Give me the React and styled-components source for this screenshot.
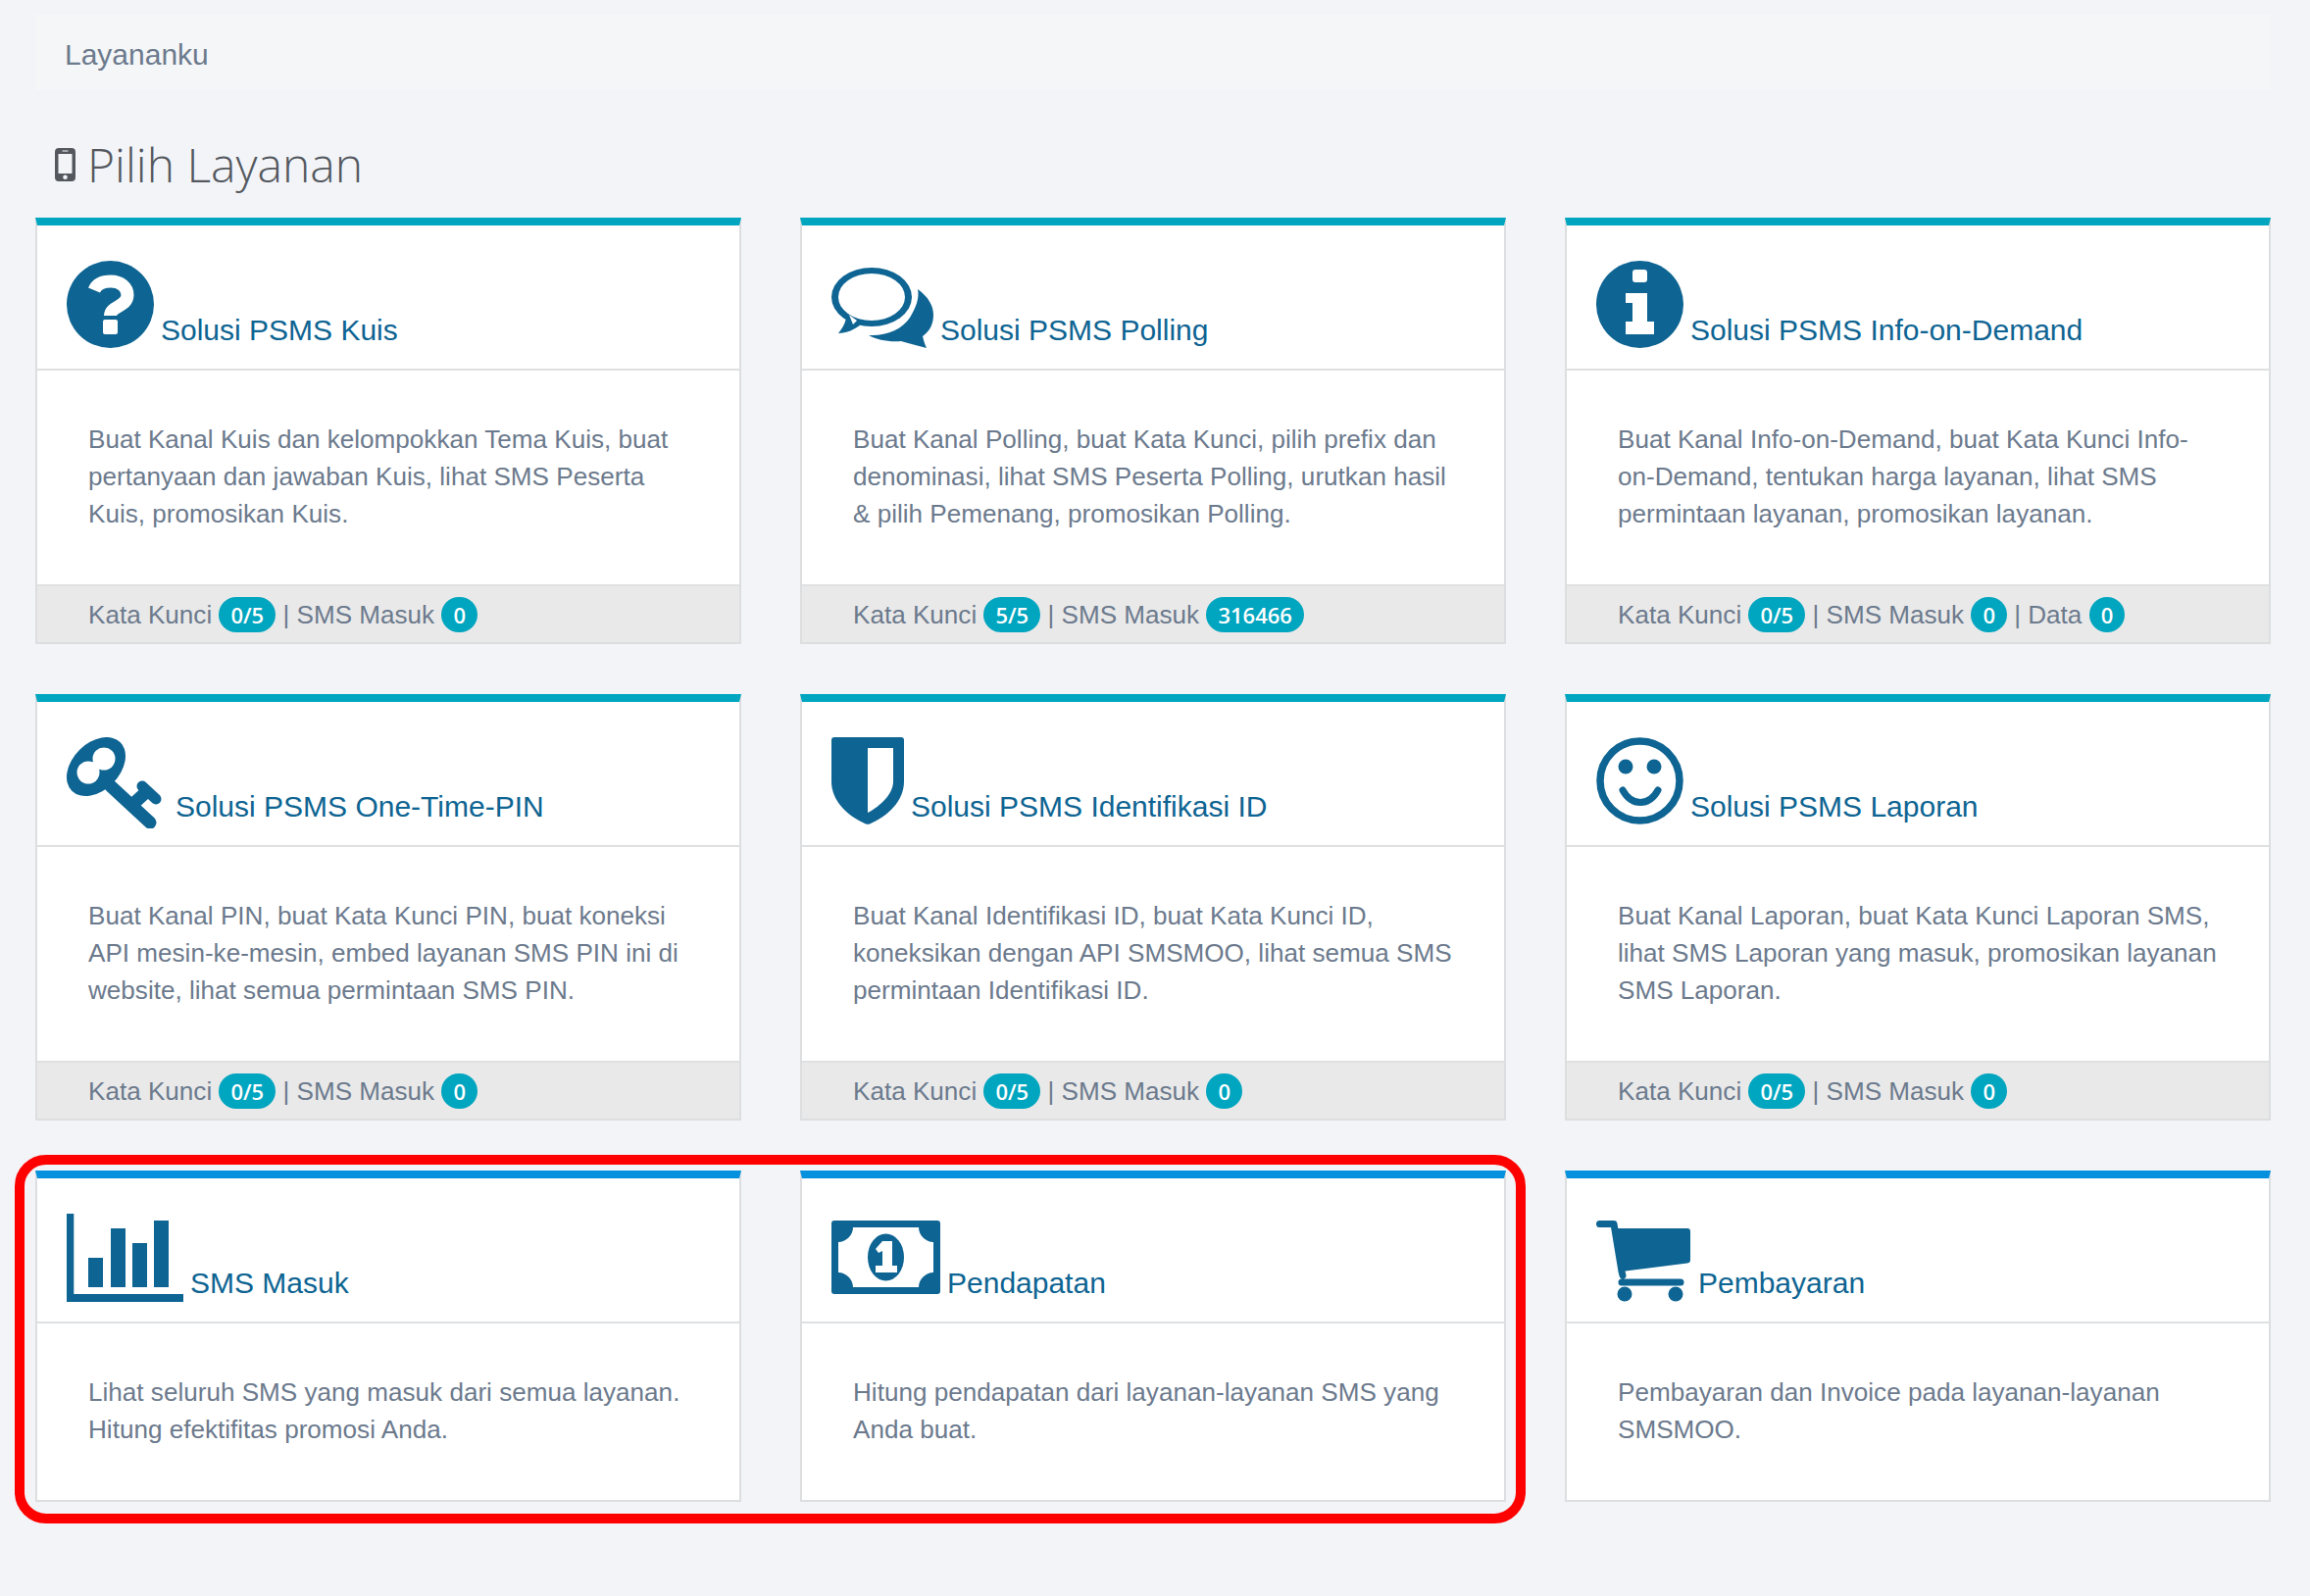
import React from "react";
import styled, { createGlobalStyle } from "styled-components";

const INK = "#0e6492";

const Global = createGlobalStyle`
  html, body { margin: 0; padding: 0; background: #f2f4f8; }
  * { box-sizing: border-box; }
`;

const Page = styled.main`
  position: relative;
  min-height: 1628px;
  padding: 15px 40px 0 36px;
  background: #f2f4f8;
  font-family: "Liberation Sans", Arial, sans-serif;
  font-size: 26.1px;
  line-height: 38px;
  color: #6c7a8d;
`;

const Breadcrumb = styled.nav`
  height: 77px;
  padding: 22px 0 0 30px;
  background: #f5f6f7;
  font-size: 30px;
  line-height: 38px;
  color: #6c7a8d;
`;

const Heading = styled.h1`
  display: flex;
  align-items: center;
  gap: 12px;
  height: 60px;
  margin: 46px 0 24px;
  padding-left: 20px;
  font-family: "Open Sans", sans-serif;
  font-weight: 300;
  font-size: 48px;
  line-height: 60px;
  color: #54585e;
`;

const Grid = styled.section`
  display: grid;
  grid-template-columns: repeat(3, 1fr);
  column-gap: 60px;
  row-gap: 51px;
`;

const Card = styled.article`
  display: flex;
  flex-direction: column;
  background: #fff;
  border: 2px solid #dcdee0;
  border-top: 8px solid ${(p) => p.$accent};
`;

const CardHeader = styled.header`
  display: flex;
  align-items: flex-end;
  height: 148px;
  padding: 36px 0 17px 30px;
  border-bottom: 2px solid #dfe0e2;
`;

const CardTitle = styled.h2`
  margin: 0 0 2px 7px;
  font-weight: 400;
  font-size: 30px;
  line-height: 40px;
  color: ${INK};
`;

const CardBody = styled.p`
  margin: 0;
  padding: 51px 52px 53px;
  height: ${(p) => p.$lines * 38 + 104}px;
`;

const CardFooter = styled.footer`
  height: 59px;
  padding: 11px 0 0 52px;
  background: #e9e9e9;
  border-top: 2px solid #dfe0e2;
  line-height: 36px;
  white-space: nowrap;
`;

const Badge = styled.span`
  display: inline-block;
  min-width: 36px;
  height: 36px;
  padding: 0 12px;
  border-radius: 18px;
  background: #00a5bf;
  color: #fff;
  font-family: "Open Sans", sans-serif;
  font-weight: 600;
  font-size: 22px;
  line-height: 36px;
  text-align: center;
  vertical-align: top;
`;

const Highlight = styled.div`
  position: absolute;
  left: 15px;
  top: 1178px;
  width: 1541px;
  height: 376px;
  border: 10px solid #ff0000;
  border-radius: 32px;
  pointer-events: none;
`;

const Phone = () => (
  <svg width="21" height="34" viewBox="0 0 21 34" aria-hidden="true">
    <path
      fill="#54585e"
      fillRule="evenodd"
      d="M4 0H17Q21 0 21 4V30Q21 34 17 34H4Q0 34 0 30V4Q0 0 4 0ZM3.5 6V26H17.5V6ZM7.5 2.4V3.6H13.5V2.4ZM10.5 27.5A2.3 2.3 0 1 0 10.5 32.1A2.3 2.3 0 1 0 10.5 27.5Z"
    />
  </svg>
);

const Canvas = ({ w, children }) => (
  <svg width={w} height="93" viewBox={`0 0 ${w} 93`} fill={INK} aria-hidden="true" style={{ flex: "none" }}>
    {children}
  </svg>
);

const QuestionIcon = () => (
  <Canvas w={89}>
    <circle cx="44.5" cy="44.5" r="44.5" />
    <path d="M28 30C31 23 38 21 45 21C55 21 62 27 62 35C62 47 44.5 46 44.5 56" fill="none" stroke="#fff" strokeWidth="13" />
    <rect x="37" y="60" width="15" height="15" rx="2" fill="#fff" />
  </Canvas>
);

const ChatIcon = () => (
  <Canvas w={104}>
    <ellipse cx="41" cy="37" rx="41" ry="30" />
    <path d="M15 56C15 62 12 68 7 74C15 74 24 70 30 65Z" />
    <ellipse cx="41" cy="37" rx="34" ry="24" fill="#fff" />
    <path d="M18 55L26 61L22 65Z" fill="#fff" />
    <path d="M88 29C99 37 104 46 104 55C104 65 100 72 93 77C94 81 95 85 97 89C88 87 79 84 71 82C59 83 47 81 38 76C56 77 72 70 80 58C86 48 90 38 88 29Z" />
  </Canvas>
);

const InfoIcon = () => (
  <Canvas w={89}>
    <circle cx="44.5" cy="44.5" r="44.5" />
    <rect x="37" y="9" width="15" height="13" rx="3" fill="#fff" />
    <path d="M30 33H52V62H59V75H30V62H37V43H30Z" fill="#fff" />
  </Canvas>
);

const KeyIcon = () => (
  <Canvas w={104}>
    <ellipse cx="30" cy="30" rx="35" ry="24" transform="rotate(-45 30 30)" />
    <circle cx="22" cy="36" r="11.5" fill="#fff" />
    <circle cx="38" cy="22" r="11.5" fill="#fff" />
    <path d="M26 32L34 26" stroke="#fff" strokeWidth="10" />
    <path d="M45 50L85 87M69 67L81 56" fill="none" stroke={INK} strokeWidth="13" strokeLinecap="round" />
    <path d="M77 50L91 63" fill="none" stroke={INK} strokeWidth="11" strokeLinecap="round" />
  </Canvas>
);

const ShieldIcon = () => (
  <Canvas w={74}>
    <path d="M3 0H71Q74 0 74 3V45C74 65 58 80 39 88.5Q37 89 35 88.5C16 80 0 65 0 45V3Q0 0 3 0Z" />
    <path d="M37 11H63V45C63 58 50 70 37 77Z" fill="#fff" />
  </Canvas>
);

const SmileIcon = () => (
  <Canvas w={89}>
    <circle cx="44.5" cy="44.5" r="40.5" fill="none" stroke={INK} strokeWidth="7.5" />
    <circle cx="30" cy="30" r="7.5" />
    <circle cx="59" cy="30" r="7.5" />
    <path d="M27 54C32 63 38 66.5 45 66.5C52 66.5 58 63 63 54" fill="none" stroke={INK} strokeWidth="7" strokeLinecap="round" />
  </Canvas>
);

const BarsIcon = () => (
  <Canvas w={119}>
    <path d="M0 0H7.3V82H119V90H0Z" />
    <rect x="22" y="45" width="15" height="30" />
    <rect x="45" y="15" width="15" height="60" />
    <rect x="67" y="30" width="15" height="45" />
    <rect x="89" y="7" width="15" height="68" />
  </Canvas>
);

const MoneyIcon = () => (
  <Canvas w={111}>
    <g transform="translate(0 7)">
      <rect width="111" height="75" rx="3" />
      <path d="M22 7H89C89 15 96 22 104 22V53C96 53 89 60 89 68H22C22 60 15 53 7 53V22C15 22 22 15 22 7Z" fill="#fff" />
      <ellipse cx="55.5" cy="37.5" rx="18.5" ry="24" />
      <path d="M52 21H62V46H67V53H45V46H52V31L48 33L45 29Z" fill="#fff" />
    </g>
  </Canvas>
);

const CartIcon = () => (
  <Canvas w={97}>
    <g transform="translate(0 7)">
      <path d="M18 8H93Q96 8 96 11V40Q96 43 93 43.5L26 52Z" />
      <path d="M3.5 3.5H18L26 52L27 56M26 63H86" fill="none" stroke={INK} strokeWidth="7" strokeLinecap="round" strokeLinejoin="round" />
      <circle cx="29" cy="75" r="7.5" />
      <circle cx="81" cy="75" r="7.5" />
    </g>
  </Canvas>
);

const CYAN = "#00a5bf";
const BLUE = "#0591dd";

const services = [
  {
    icon: QuestionIcon, accent: CYAN, title: "Solusi PSMS Kuis", lines: 3,
    text: "Buat Kanal Kuis dan kelompokkan Tema Kuis, buat pertanyaan dan jawaban Kuis, lihat SMS Peserta Kuis, promosikan Kuis.",
    stats: [["Kata Kunci", "0/5"], ["SMS Masuk", "0"]],
  },
  {
    icon: ChatIcon, accent: CYAN, title: "Solusi PSMS Polling", lines: 3,
    text: "Buat Kanal Polling, buat Kata Kunci, pilih prefix dan denominasi, lihat SMS Peserta Polling, urutkan hasil & pilih Pemenang, promosikan Polling.",
    stats: [["Kata Kunci", "5/5"], ["SMS Masuk", "316466"]],
  },
  {
    icon: InfoIcon, accent: CYAN, title: "Solusi PSMS Info-on-Demand", lines: 3,
    text: "Buat Kanal Info-on-Demand, buat Kata Kunci Info-on-Demand, tentukan harga layanan, lihat SMS permintaan layanan, promosikan layanan.",
    stats: [["Kata Kunci", "0/5"], ["SMS Masuk", "0"], ["Data", "0"]],
  },
  {
    icon: KeyIcon, accent: CYAN, title: "Solusi PSMS One-Time-PIN", lines: 3,
    text: "Buat Kanal PIN, buat Kata Kunci PIN, buat koneksi API mesin-ke-mesin, embed layanan SMS PIN ini di website, lihat semua permintaan SMS PIN.",
    stats: [["Kata Kunci", "0/5"], ["SMS Masuk", "0"]],
  },
  {
    icon: ShieldIcon, accent: CYAN, title: "Solusi PSMS Identifikasi ID", lines: 3,
    text: "Buat Kanal Identifikasi ID, buat Kata Kunci ID, koneksikan dengan API SMSMOO, lihat semua SMS permintaan Identifikasi ID.",
    stats: [["Kata Kunci", "0/5"], ["SMS Masuk", "0"]],
  },
  {
    icon: SmileIcon, accent: CYAN, title: "Solusi PSMS Laporan", lines: 3,
    text: "Buat Kanal Laporan, buat Kata Kunci Laporan SMS, lihat SMS Laporan yang masuk, promosikan layanan SMS Laporan.",
    stats: [["Kata Kunci", "0/5"], ["SMS Masuk", "0"]],
  },
  {
    icon: BarsIcon, accent: BLUE, title: "SMS Masuk", lines: 2,
    text: "Lihat seluruh SMS yang masuk dari semua layanan. Hitung efektifitas promosi Anda.",
  },
  {
    icon: MoneyIcon, accent: BLUE, title: "Pendapatan", lines: 2,
    text: "Hitung pendapatan dari layanan-layanan SMS yang Anda buat.",
  },
  {
    icon: CartIcon, accent: BLUE, title: "Pembayaran", lines: 2,
    text: "Pembayaran dan Invoice pada layanan-layanan SMSMOO.",
  },
];

export default function App() {
  return (
    <Page>
      <Global />
      <Breadcrumb>Layananku</Breadcrumb>
      <Heading>
        <Phone />
        Pilih Layanan
      </Heading>
      <Grid>
        {services.map(({ icon: Icon, accent, title, text, lines, stats }) => (
          <Card key={title} $accent={accent}>
            <CardHeader>
              <Icon />
              <CardTitle>{title}</CardTitle>
            </CardHeader>
            <CardBody $lines={lines}>{text}</CardBody>
            {stats && (
              <CardFooter>
                {stats.map(([label, value], i) => (
                  <React.Fragment key={label}>
                    {i > 0 && " | "}
                    {label} <Badge>{value}</Badge>
                  </React.Fragment>
                ))}
              </CardFooter>
            )}
          </Card>
        ))}
      </Grid>
      <Highlight />
    </Page>
  );
}
